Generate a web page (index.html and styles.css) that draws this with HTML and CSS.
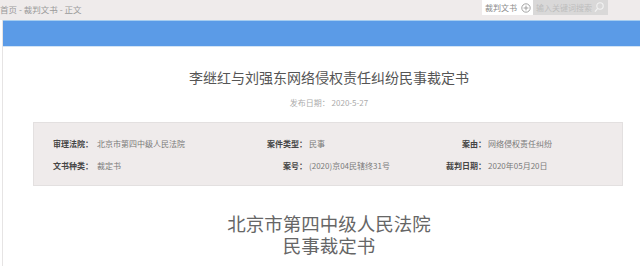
FILE: index.html
```html
<!DOCTYPE html>
<html lang="zh-CN">
<head>
    <meta charset="UTF-8">
    <meta name="viewport" content="width=device-width, initial-scale=1.0">
    <title>裁判文书 - 正文</title>
    <link rel="stylesheet" href="styles.css">
</head>
<body>
    <!-- top bar -->
    <div class="topbar">
        <div class="crumbs">首页 - 裁判文书 - 正文</div>
        <div class="search-area">
            <span class="search-type">裁判文书</span>
            <svg class="plus-icon" width="10" height="10" viewBox="0 0 10 10">
                <circle cx="5" cy="5" r="4.2" fill="none" stroke="#9a9a9a" stroke-width="0.9"/>
                <path d="M5 2.6V7.4M2.6 5H7.4" stroke="#9a9a9a" stroke-width="0.9"/>
            </svg>
            <div class="search-box">
                <span class="placeholder">输入关键词搜索</span>
                <svg class="search-icon" width="10" height="11" viewBox="0 0 10 11">
                    <circle cx="6" cy="4" r="3.2" fill="none" stroke="#f2f2f2" stroke-width="1.1"/>
                    <path d="M3.7 6.4L1 9.6" stroke="#f2f2f2" stroke-width="1.3"/>
                </svg>
            </div>
        </div>
    </div>

    <div class="page">
        <div class="banner"></div>

        <h1 class="doc-title">李继红与刘强东网络侵权责任纠纷民事裁定书</h1>
        <div class="pub-date">发布日期： 2020-5-27</div>

        <!-- case info -->
        <div class="info-box">
            <div class="info-grid">
                <span class="label first">审理法院：</span>
                <span class="value">北京市第四中级人民法院</span>
                <span class="label">案件类型：</span>
                <span class="value">民事</span>
                <span class="label">案由：</span>
                <span class="value">网络侵权责任纠纷</span>

                <span class="label first">文书种类：</span>
                <span class="value">裁定书</span>
                <span class="label">案号：</span>
                <span class="value">(2020)京04民辖终31号</span>
                <span class="label">裁判日期：</span>
                <span class="value">2020年05月20日</span>
            </div>
        </div>

        <div class="doc-head">
            <div class="head-line">北京市第四中级人民法院</div>
            <div class="head-line">民事裁定书</div>
        </div>
    </div>
</body>
</html>
```

FILE: styles.css
```css
body {
    margin: 0;
    background: #ffffff;
    font-family: "Noto Sans CJK SC", "Liberation Sans", sans-serif;
    overflow: hidden;
    width: 640px;
    height: 266px;
}
.topbar {
    height: 20px;
    background: #efebeb;
    display: flex;
    justify-content: space-between;
    align-items: flex-start;
}
.crumbs {
    font-size: 8.5px;
    line-height: 18px;
    color: #9a9a9a;
    white-space: nowrap;
}
.search-area {
    display: flex;
    align-items: center;
    background: #ffffff;
    height: 15px;
    padding-left: 3px;
    margin-right: 32px;
}
.search-type {
    font-size: 8px;
    color: #8a8a8a;
    line-height: 15px;
}
.plus-icon {
    margin: 0 2px 0 4px;
}
.search-box {
    display: flex;
    align-items: center;
    justify-content: space-between;
    width: 68px;
    height: 15px;
    background: #d9d8d8;
    padding: 0 4px 0 3px;
}
.placeholder {
    font-size: 8px;
    color: #bdbdbd;
    white-space: nowrap;
}
.page {
    margin-left: 2px;
    width: 652px;
    border-left: 1px solid #e6e4e4;
    height: 246px;
}
.banner {
    height: 25px;
    background: #5b9be7;
    border-top: 1px solid #a6cdf0;
    border-bottom: 1px solid #d3e4f5;
}
.doc-title {
    margin: 20px 0 0;
    font-size: 14px;
    line-height: 20px;
    font-weight: normal;
    color: #555555;
    text-align: center;
}
.pub-date {
    margin-top: 9px;
    font-size: 8px;
    line-height: 14px;
    color: #ababab;
    text-align: center;
}
.info-box {
    margin: 12px 0 0 30px;
    width: 590px;
    box-sizing: border-box;
    background: #efebeb;
    border: 1px solid #e3e0e0;
    padding: 10px 0 8px 19px;
}
.info-grid {
    display: grid;
    grid-template-columns: 42px 152px 60px 119px 60px 1fr;
    line-height: 22px;
    font-size: 8px;
    white-space: nowrap;
}
.label {
    font-weight: bold;
    color: #454545;
    text-align: right;
}
.label.first {
    text-align: left;
}
.value {
    color: #7a7a7a;
    padding-left: 2px;
}
.doc-head {
    margin-top: 26px;
    font-size: 18.5px;
    color: #666666;
    text-align: center;
}
.head-line {
    height: 22px;
    line-height: 22px;
}
```
